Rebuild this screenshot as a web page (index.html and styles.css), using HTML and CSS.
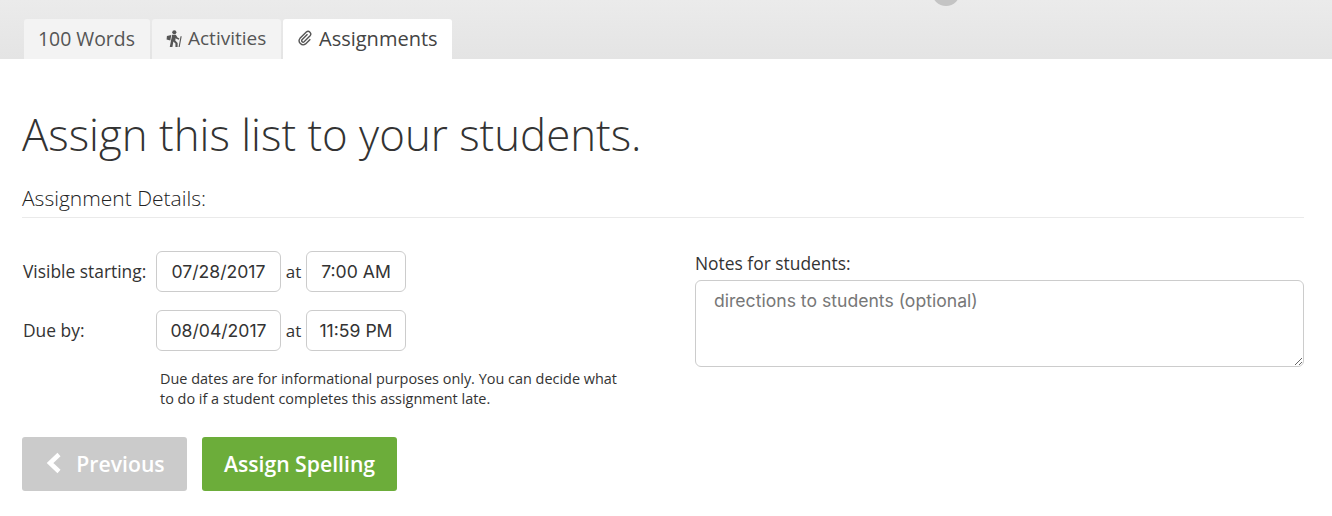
FILE: index.html
```html
<!DOCTYPE html>
<html lang="en">
<head>
<meta charset="utf-8">
<title>Assignments</title>
<link rel="stylesheet" href="styles.css">
</head>
<body>
<header class="topbar">
  <span class="avatar"></span>
  <nav class="tabs">
    <a class="tab tab-words">100 Words</a>
    <a class="tab tab-activities"><svg class="tab-icon hiker" viewBox="0 0 18 18"><circle cx="8.800" cy="2.400" r="2.200"/><path d="M6.500 5h3.900l1.800 3 2 1-.6 1.400-2.700-1.100-.6-.9-.5 2.700 2.500 2.700V18h-2.300v-3.600L7.800 12.300 6.800 18H4l1.400-7.500L6 8z"/><path d="M1 6.300 5.600 5.200l-1 5.800L.6 10z"/><path d="M15.400 6.500l1.200.2-2.100 11.300h-1.200z"/></svg>Activities</a>
    <a class="tab tab-active"><svg class="tab-icon clip" viewBox="0 0 16 16"><path d="M10.500 4.200 5 9.700a1.500 1.500 0 0 0 2.100 2.100l6-6a2.700 2.700 0 0 0-3.800-3.800L3 8.300a4 4 0 0 0 5.600 5.600l4.700-4.700"/></svg>Assignments</a>
  </nav>
</header>
<main class="content">
  <h1 class="title">Assign this list to your students.</h1>
  <h2 class="section">Assignment Details:</h2>
  <div class="columns">
    <form class="schedule">
      <div class="row">
        <label class="row-label">Visible starting:</label>
        <span class="field field-date">07/28/2017</span>
        <span class="at">at</span>
        <span class="field field-time">7:00 AM</span>
      </div>
      <div class="row">
        <label class="row-label">Due by:</label>
        <span class="field field-date">08/04/2017</span>
        <span class="at">at</span>
        <span class="field field-time">11:59 PM</span>
      </div>
      <p class="hint">Due dates are for informational purposes only. You can decide what to do if a student completes this assignment late.</p>
    </form>
    <div class="notes">
      <label class="notes-label" for="notes">Notes for students:</label>
      <textarea class="notes-input" id="notes" placeholder="directions to students (optional)"></textarea>
    </div>
  </div>
  <div class="actions">
    <button class="btn btn-prev" type="button"><svg class="chev" viewBox="0 0 16 22"><path d="M13 2.500 4 11l9 8.500" /></svg>Previous</button>
    <button class="btn btn-assign" type="button">Assign Spelling</button>
  </div>
</main>
</body>
</html>
```
FILE: styles.css
```css
* { box-sizing: border-box; }
html, body { margin: 0; padding: 0; }
body {
  background: #fff;
  color: #333;
  font-family: "Open Sans", sans-serif;
  height: 516px;
  overflow: hidden;
}
.topbar {
  position: relative;
  height: 59px;
  padding: 19px 0 0 24px;
  background: linear-gradient(#ebebeb, #e4e4e4);
}
.avatar {
  position: absolute;
  left: 932px;
  top: -22px;
  width: 28px;
  height: 28px;
  border-radius: 50%;
  background: #c4c4c4;
}
.tabs { display: flex; gap: 2px; height: 40px; }
.tab {
  display: flex;
  align-items: center;
  height: 40px;
  padding: 0 0 2px;
  border-radius: 3px 3px 0 0;
  background: #f3f3f3;
  color: #555;
  font-size: 19.400px;
}
.tab-words { width: 126px; padding-left: 14px; }
.tab-activities { width: 129px; padding-left: 14px; font-size: 19px; }
.tab-active { width: 169px; padding-left: 14px; background: #fff; color: #444; font-size: 20px; font-weight: 500; }
.tab-icon { flex: none; }
.hiker { width: 17px; height: 17px; margin-right: 5px; fill: #555; }
.clip { width: 16px; height: 16px; margin-right: 6px; fill: none; stroke: #555; stroke-width: 1.400; }
.content { padding: 0 28px 0 22px; }
.title {
  margin: 45px 0 0;
  font-size: 43.800px;
  font-weight: 300;
  line-height: 60px;
  color: #333;
}
.section {
  margin: 19px 0 0;
  height: 35px;
  border-bottom: 1px solid #eaeaea;
  font-size: 21px;
  font-weight: 300;
  line-height: 30px;
  color: #222;
}
.columns { display: flex; margin-top: 33px; }
.schedule { width: 673px; flex: none; }
.row { display: flex; align-items: center; height: 41px; margin-bottom: 18px; }
.row-label { width: 134px; padding: 0 0 2px 1px; font-size: 17.400px; font-weight: 400; color: #333; flex: none; }
.field {
  display: flex;
  align-items: center;
  justify-content: center;
  height: 41px;
  border: 1px solid #ccc;
  border-radius: 6px;
  font-family: Inter, "Liberation Sans", sans-serif;
  font-size: 17.600px;
  color: #333;
}
.field-date { width: 125px; }
.field-time { width: 100px; }
.at { width: 25px; text-align: center; font-size: 17px; color: #333; }
.hint {
  width: 470px;
  margin: 0 0 0 138px;
  font-size: 14.440px;
  line-height: 20px;
  color: #333;
}
.notes { flex: 1; display: flex; flex-direction: column; margin-top: 1px; }
.notes-label { font-size: 17.400px; font-weight: 400; line-height: 22px; margin-bottom: 6px; color: #333; }
.notes-input {
  display: block;
  width: 100%;
  height: 87px;
  padding: 9px 18px;
  border: 1px solid #ccc;
  border-radius: 6px;
  font-family: Inter, "Liberation Sans", sans-serif;
  font-size: 17.600px;
  line-height: 22px;
  resize: vertical;
  outline: none;
}
.notes-input::placeholder { color: #777; opacity: 1; }
.actions { display: flex; gap: 15px; margin-top: 28px; }
.btn {
  display: flex;
  align-items: center;
  justify-content: center;
  height: 54px;
  padding: 0 6px 2px;
  border: 0;
  border-radius: 3px;
  color: #fff;
  font-family: "Open Sans", sans-serif;
  font-size: 21.200px;
  font-weight: 600;
}
.btn-prev { width: 165px; padding-left: 8px; background: #cbcbcb; }
.btn-assign { width: 195px; background: #6cad3a; }
.chev { width: 16px; height: 22px; margin-right: 14px; fill: none; stroke: #fff; stroke-width: 4.500; }
```
